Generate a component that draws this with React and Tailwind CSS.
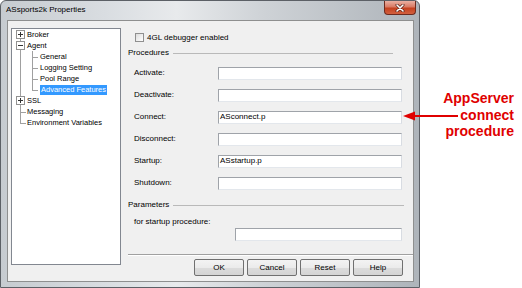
import React from 'react'

const LINE = 'bg-[#a0a0a0]'

function Box({ open }) {
  return (
    <div className="absolute left-[4px] top-[1px] w-[9px] h-[9px] border border-[#919191] bg-white flex items-center justify-center">
      <div className="relative w-[5px] h-[5px]">
        <div className="absolute left-0 top-[2px] w-[5px] h-px bg-[#333]" />
        {!open && <div className="absolute left-[2px] top-0 w-px h-[5px] bg-[#333]" />}
      </div>
    </div>
  )
}

// gutter for the root level: vertical line through x=20, optional +/- box
function RootGutter({ box, first, last, tick }) {
  return (
    <div className="relative w-[15px] h-full shrink-0">
      <div className={`absolute left-[8px] w-px ${LINE} ${first ? 'top-1/2' : 'top-0'} ${last ? 'bottom-1/2' : 'bottom-0'}`} />
      {tick && <div className={`absolute left-[8px] top-1/2 w-[6px] h-px ${LINE}`} />}
      {box && <Box open={box === 'open'} />}
    </div>
  )
}

function ChildGutter({ first, last }) {
  return (
    <div className="relative w-[13px] h-full shrink-0">
      <div className={`absolute left-[5px] w-px ${LINE} top-0 ${last ? 'bottom-1/2' : 'bottom-0'}`} />
      <div className={`absolute left-[5px] top-1/2 w-[6px] h-px ${LINE}`} />
    </div>
  )
}

function Tree() {
  const row = 'flex items-center h-[11px] text-[7.5px] leading-none whitespace-nowrap'
  return (
    <div className="ml-[3px] mt-[7px] w-[110px] h-[237px] border border-[#828790] bg-white shrink-0 overflow-hidden">
      <div className={row}><RootGutter box="closed" first /><span>Broker</span></div>
      <div className={row}><RootGutter box="open" /><span>Agent</span></div>
      <div className={row}><RootGutter /><ChildGutter /><span>General</span></div>
      <div className={row}><RootGutter /><ChildGutter /><span>Logging Setting</span></div>
      <div className={row}><RootGutter /><ChildGutter /><span>Pool Range</span></div>
      <div className={row}>
        <RootGutter /><ChildGutter last />
        <span className="bg-[#3399ff] text-white px-[1px] h-[10px] flex items-center">Advanced Features</span>
      </div>
      <div className={row}><RootGutter box="closed" /><span>SSL</span></div>
      <div className={row}><RootGutter tick /><span>Messaging</span></div>
      <div className={row}><RootGutter tick last /><span>Environment Variables</span></div>
    </div>
  )
}

function Input({ value, className = '' }) {
  return (
    <div className={`h-[13px] bg-white border border-[#9fa3a9] border-r-[#d8dce2] border-b-[#e3e7ec] flex items-center pl-[1px] text-[8px] leading-none ${className}`}>
      {value}
    </div>
  )
}

function Header({ label, lineRight }) {
  return (
    <div className="flex items-center h-[12px] text-[8px] leading-none">
      <span>{label}</span>
      <div className={`flex-1 ml-[4px] border-t border-[#b9b9b9] ${lineRight}`} />
    </div>
  )
}

function Field({ label, value }) {
  return (
    <div className="flex items-center h-[22px] text-[8px] leading-none">
      <span className="ml-[6px] w-[84px]">{label}</span>
      <Input value={value} className="w-[184px]" />
    </div>
  )
}

function Button({ children }) {
  return (
    <div className="w-[50px] h-[17px] rounded-[2px] border border-[#707070] bg-[linear-gradient(to_bottom,#f3f3f3_0%,#ebebeb_50%,#dcdcdc_51%,#d4d4d4_100%)] flex items-center justify-center text-[8px] leading-none">
      {children}
    </div>
  )
}

function Window() {
  return (
    <div className="w-[420px] h-[288px] shrink-0 rounded-t-[6px] border border-[#5c6066] bg-[linear-gradient(to_right,#c6cbd0_0%,#d9dde1_25%,#e8eaec_42%,#cfd3d7_62%,#aeb4ba_100%)] flex flex-col pl-[6px] pr-[5px] pb-[5px]">
      <div className="h-[19px] shrink-0 flex items-start -ml-[1px]">
        <span className="mt-[5px] text-[8px] leading-none text-black">ASsports2k Properties</span>
        <div className="ml-auto mr-[-2px] w-[32px] h-[14px] rounded-b-[4px] border border-t-0 border-[#6d2b1f] bg-[linear-gradient(to_bottom,#eab0a2_0%,#d97a64_45%,#c4411f_55%,#d2603f_100%)] flex items-center justify-center">
          <svg width="10" height="8" viewBox="0 0 10 8">
            <path d="M2 1 L8 7 M8 1 L2 7" stroke="#5a2318" strokeWidth="3" strokeLinecap="round" />
            <path d="M2 1 L8 7 M8 1 L2 7" stroke="#ffffff" strokeWidth="1.6" strokeLinecap="round" />
          </svg>
        </div>
      </div>
      <div className="flex-1 border border-[#8e8f8f] bg-[#f0f0f0] flex">
        <Tree />
        <div className="flex-1 ml-[7px] pt-[11px] flex flex-col">
          <div className="flex items-center h-[11px] text-[8px] leading-none">
            <div className="ml-[7px] w-[9px] h-[9px] border border-[#8f8f8f] bg-[linear-gradient(135deg,#dcdcdc,#ffffff)]" />
            <span className="ml-[3px]">4GL debugger enabled</span>
          </div>
          <div className="mt-[4px]">
            <Header label="Procedures" lineRight="mr-[20px]" />
          </div>
          <div className="mt-[3px] flex flex-col">
            <Field label="Activate:" />
            <Field label="Deactivate:" />
            <Field label="Connect:" value="ASconnect.p" />
            <Field label="Disconnect:" />
            <Field label="Startup:" value="ASstartup.p" />
            <Field label="Shutdown:" />
          </div>
          <div className="mt-[5px]">
            <Header label="Parameters" lineRight="mr-[9px]" />
          </div>
          <div className="mt-[5px] h-[12px] flex items-center text-[8px] leading-none">
            <span className="ml-[6px]">for startup procedure:</span>
          </div>
          <Input className="ml-[107px] w-[167px]" />
          <div className="mt-[13px] border-t border-[#a0a0a0] border-b border-b-white" />
          <div className="mt-[3px] mr-[10px] flex justify-end gap-[3px]">
            <Button>OK</Button>
            <Button>Cancel</Button>
            <Button>Reset</Button>
            <Button>Help</Button>
          </div>
        </div>
      </div>
    </div>
  )
}

export default function App() {
  return (
    <div className="relative w-[522px] h-[288px] bg-white flex font-['Liberation_Sans',Arial,sans-serif] text-black overflow-hidden">
      <Window />
      {/* callout */}
      <div className="absolute left-[404px] top-[90px] w-[110px] flex flex-col items-end text-[14px] leading-[16.5px] font-bold text-[#e00000]">
        <span>AppServer</span>
        <div className="flex items-center">
          <svg width="55" height="10" viewBox="0 0 55 10" className="mt-[2px]">
            <polygon points="0,5 12,0.5 12,9.5" fill="#e00000" />
            <line x1="11" y1="5" x2="55" y2="5" stroke="#e00000" strokeWidth="2" />
          </svg>
          <span className="ml-[2px]">connect</span>
        </div>
        <span>procedure</span>
      </div>
    </div>
  )
}
